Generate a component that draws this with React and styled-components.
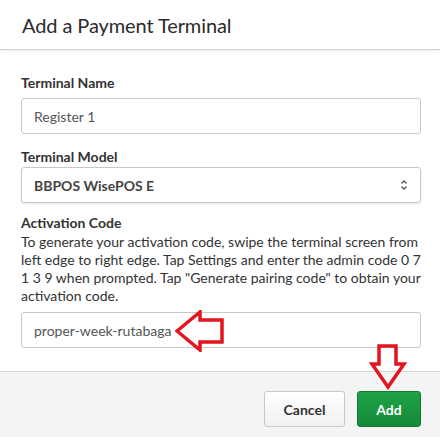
import React from 'react';
import styled, { createGlobalStyle } from 'styled-components';

const GlobalStyle = createGlobalStyle`
    html, body {
        margin: 0;
        padding: 0;
        background: #ffffff;
        font-family: Lato, "Open Sans", sans-serif;
        color: #333333;
    }
`;

const App = () => {
    return (
        <>
            <GlobalStyle />
            <Modal>
                <Header>
                    <Title>Add a Payment Terminal</Title>
                </Header>
                <Body>
                    <Field $gap="14px">
                        <Label $gap="6px">Terminal Name</Label>
                        <Input defaultValue="Register 1" />
                    </Field>
                    <Field $gap="11px">
                        <Label>Terminal Model</Label>
                        <SelectBox>
                            <SelectText>BBPOS WisePOS E</SelectText>
                            <svg width="8" height="12" viewBox="0 0 8 12">
                                <path d="M1.5 4.5 L4 2 L6.5 4.5 M1.5 7.5 L4 10 L6.5 7.5" fill="none" stroke="#555" strokeWidth="1.3" />
                            </svg>
                        </SelectBox>
                    </Field>
                    <Field>
                        <Label>Activation Code</Label>
                        <Help>
                            To generate your activation code, swipe the terminal screen from left edge to right edge. Tap Settings and enter the admin code 0 7 1 3 9 when prompted. Tap "Generate pairing code" to obtain your activation code.
                        </Help>
                        <CodeWrap>
                            <Input defaultValue="proper-week-rutabaga" />
                            <LeftArrow width="50" height="42" viewBox="0 0 50 42">
                                <path d="M2 21 L25 2 L25 10 L47 10 L47 32 L25 32 L25 40 Z" fill="#fff" stroke="#e3161f" strokeWidth="3.5" strokeLinejoin="miter" />
                            </LeftArrow>
                        </CodeWrap>
                    </Field>
                </Body>
                <Footer>
                    <Button>Cancel</Button>
                    <AddWrap>
                        <DownArrow width="38" height="46" viewBox="0 0 38 46">
                            <path d="M10 2 L27 2 L27 20 L35 20 L19 43 L3 20 L10 20 Z" fill="none" stroke="#e3161f" strokeWidth="3.5" strokeLinejoin="miter" />
                        </DownArrow>
                        <Button $primary>Add</Button>
                    </AddWrap>
                </Footer>
            </Modal>
        </>
    );
};

export default App;

const Modal = styled.div`
    width: 440px;
    height: 437px;
    overflow: hidden;
    display: flex;
    flex-direction: column;
    background: #fff;
`;

const Header = styled.div`
    height: 49px;
    display: flex;
    align-items: center;
    padding: 0 22px;
    border-bottom: 1px solid #cfcfcf;
    box-shadow: 0 2px 3px rgba(0, 0, 0, 0.06);
    position: relative;
    z-index: 1;
`;

const Title = styled.h3`
    margin: 0;
    font-size: 20px;
    font-weight: 400;
    color: #2b2b2b;
    letter-spacing: -0.1px;
`;

const Body = styled.div`
    padding: 24px 19px 23px 21px;
    display: flex;
    flex-direction: column;
`;

const Field = styled.div`
    display: flex;
    flex-direction: column;
    margin-bottom: ${p => p.$gap || '0'};
`;

const Label = styled.label`
    font-size: 14px;
    font-weight: 700;
    line-height: 18px;
    color: #333;
    margin-bottom: ${p => p.$gap || '1px'};
`;

const Help = styled.p`
    margin: 0 0 7px;
    font-size: 14px;
    line-height: 18px;
    color: #333;
`;

const Input = styled.input`
    box-sizing: border-box;
    width: 400px;
    height: 36px;
    border: 1px solid #c8c8c8;
    border-radius: 3px;
    padding: 0 12px;
    font-family: Lato, "Open Sans", sans-serif;
    font-size: 14px;
    color: #555;
    background: #fff;
    outline: none;
`;

const SelectBox = styled.div`
    box-sizing: border-box;
    width: 400px;
    height: 36px;
    border: 1px solid #c8c8c8;
    border-radius: 3px;
    padding: 0 12px;
    display: flex;
    align-items: center;
    justify-content: space-between;
    box-shadow: 0 1px 2px rgba(0, 0, 0, 0.1);
`;

const SelectText = styled.span`
    font-size: 14px;
    font-weight: 700;
    color: #444;
`;

const CodeWrap = styled.div`
    position: relative;
`;

const LeftArrow = styled.svg`
    position: absolute;
    left: 154px;
    top: -2px;
`;

const Footer = styled.div`
    flex: 1;
    background: #f4f4f4;
    border-top: 1px solid #d6d6d6;
    display: flex;
    justify-content: flex-end;
    align-items: flex-start;
    gap: 12px;
    padding: 19px 19px 0 0;
`;

const AddWrap = styled.div`
    position: relative;
`;

const DownArrow = styled.svg`
    position: absolute;
    left: 12px;
    top: -47px;
`;

const Button = styled.button`
    box-sizing: border-box;
    height: 36px;
    min-width: ${p => (p.$primary ? '64px' : '81px')};
    padding: 0 14px;
    border-radius: 3px;
    font-family: Lato, "Open Sans", sans-serif;
    font-size: 14px;
    font-weight: 700;
    cursor: pointer;
    color: ${p => (p.$primary ? '#fff' : '#333')};
    border: 1px solid ${p => (p.$primary ? '#137a2f' : '#c8c8c8')};
    background: ${p => (p.$primary ? 'linear-gradient(#1fa347, #138a37)' : 'linear-gradient(#ffffff, #f1f1f1)')};
`;
